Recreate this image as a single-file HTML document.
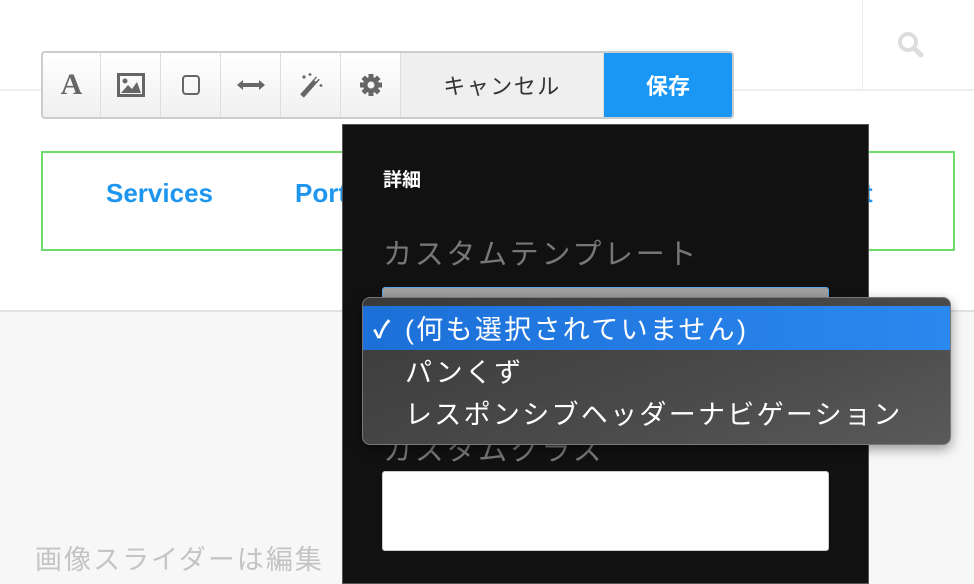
<!DOCTYPE html>
<html><head><meta charset="utf-8"><style>
*{margin:0;padding:0;box-sizing:border-box}
body{width:974px;height:572px;overflow:hidden;position:relative;background:#f7f7f7;font-family:"Liberation Sans","Noto Sans CJK JP",sans-serif}
.abs{position:absolute;white-space:nowrap}
</style></head><body>
<div class="abs" style="left:0;top:0;width:974px;height:312px;background:#fff;border-bottom:2px solid #e2e2e2"></div>
<div class="abs" style="left:0;top:89px;width:974px;height:2px;background:#eee"></div>
<div class="abs" style="left:862px;top:0;width:1px;height:90px;background:#eee"></div>
<svg class="abs" style="left:896px;top:30px" width="30" height="30" viewBox="0 0 30 30"><circle cx="12" cy="12" r="8" fill="none" stroke="#ddd" stroke-width="4"/><line x1="18" y1="18" x2="25" y2="25" stroke="#ddd" stroke-width="5" stroke-linecap="round"/></svg>

<div class="abs" style="left:41px;top:151px;width:914px;height:100px;border:2px solid #6ddc6d"></div>
<div class="abs" style="left:106px;top:178px;font-size:26px;font-weight:bold;color:#1e96f0">Services</div>
<div class="abs" style="left:295px;top:178px;font-size:26px;font-weight:bold;color:#1e96f0">Port</div>
<div class="abs" style="left:864px;top:178px;font-size:26px;font-weight:bold;color:#1e96f0">t</div>
<div class="abs" style="left:35px;top:538px;font-size:27px;letter-spacing:2px;color:#c4c4c4">画像スライダーは編集</div>

<div class="abs" style="left:41px;top:51px;width:693px;height:68px;border:2px solid #ccc;border-radius:4px;background:linear-gradient(#fff,#f0f0f0);display:flex;overflow:hidden">
 <div style="width:58px;border-right:1px solid #ddd;display:flex;align-items:center;justify-content:center;font-family:'Liberation Serif',serif;font-weight:bold;font-size:30px;color:#666">A</div>
 <div style="width:60px;border-right:1px solid #ddd;display:flex;align-items:center;justify-content:center"><svg width="28" height="24" viewBox="0 0 28 24"><rect x="1.5" y="1.5" width="25" height="21" fill="none" stroke="#666" stroke-width="3"/><circle cx="8" cy="8" r="2.5" fill="#666"/><path d="M4 20 L11 12 L15 16 L20 9 L24 20Z" fill="#666"/></svg></div>
 <div style="width:60px;border-right:1px solid #ddd;display:flex;align-items:center;justify-content:center"><div style="width:18px;height:20px;border:2.5px solid #666;border-radius:4px"></div></div>
 <div style="width:60px;border-right:1px solid #ddd;display:flex;align-items:center;justify-content:center"><svg width="30" height="12" viewBox="0 0 30 12"><path d="M1 6 L7 1 V4 H23 V1 L29 6 L23 11 V8 H7 V11Z" fill="#666"/></svg></div>
 <div style="width:60px;border-right:1px solid #ddd;display:flex;align-items:center;justify-content:center"><svg width="26" height="26" viewBox="0 0 26 26"><path d="M4 24 L20 6" stroke="#666" stroke-width="5"/><path d="M17 9 L21 5" stroke="#fff" stroke-width="2"/><path d="M6 3v4M4 5h4M12 1v3M10.5 2.5h3M23 12v3M21.5 13.5h3" stroke="#666" stroke-width="1.3"/></svg></div>
 <div style="width:60px;border-right:1px solid #ddd;display:flex;align-items:center;justify-content:center"><svg width="24" height="24" viewBox="0 0 24 24"><g fill="#666"><circle cx="12" cy="12" r="8"/><rect x="9.5" y="1" width="5" height="22"/><rect x="1" y="9.5" width="22" height="5"/><rect x="9.5" y="1" width="5" height="22" transform="rotate(45 12 12)"/><rect x="9.5" y="1" width="5" height="22" transform="rotate(-45 12 12)"/></g><circle cx="12" cy="12" r="3.5" fill="#f6f6f6"/></svg></div>
 <div style="width:203px;border-right:1px solid #ddd;background:#efefef;display:flex;align-items:center;justify-content:center;font-size:22px;letter-spacing:1.5px;color:#333">キャンセル</div>
 <div style="flex:1;background:#1a97f5;display:flex;align-items:center;justify-content:center;font-size:22px;font-weight:bold;color:#fff">保存</div>
</div>

<div class="abs" style="left:342px;top:124px;width:527px;height:460px;background:#111;border:1px solid #555">
 <div class="abs" style="left:40px;top:40px;font-size:19px;font-weight:bold;color:#fff">詳細</div>
 <div class="abs" style="left:40px;top:106px;font-size:29px;letter-spacing:2.7px;color:#777">カスタムテンプレート</div>
 <div class="abs" style="left:39px;top:162px;width:447px;height:40px;background:#a0a0a0;border:1px solid #5aa6e8;border-radius:3px"></div>
 <div class="abs" style="left:40px;top:302px;font-size:29px;letter-spacing:2.7px;color:#777">カスタムクラス</div>
 <div class="abs" style="left:39px;top:346px;width:447px;height:80px;background:#fff;border:1px solid #ccc;border-radius:3px"></div>
</div>

<div class="abs" style="left:362px;top:297px;width:589px;height:148px;border-radius:8px;background:linear-gradient(160deg,#3a3a3a,#4a4a4a 60%,#5a5a5a);border:1px solid #777;box-shadow:0 4px 12px rgba(0,0,0,.4);overflow:hidden">
 <div class="abs" style="left:0;top:8px;width:589px;height:44px;background:linear-gradient(90deg,#1c70d8,#2b88ef)"></div>
 <div class="abs" style="left:10px;top:12px;font-size:24px;color:#fff;font-weight:bold">✓</div>
 <div class="abs" style="left:42px;top:10px;font-size:27px;letter-spacing:2.3px;color:#fff">(何も選択されていません)</div>
 <div class="abs" style="left:42px;top:53px;font-size:27px;letter-spacing:2.3px;color:#fff">パンくず</div>
 <div class="abs" style="left:42px;top:95px;font-size:27px;letter-spacing:2.3px;color:#fff">レスポンシブヘッダーナビゲーション</div>
</div>
</body></html>
